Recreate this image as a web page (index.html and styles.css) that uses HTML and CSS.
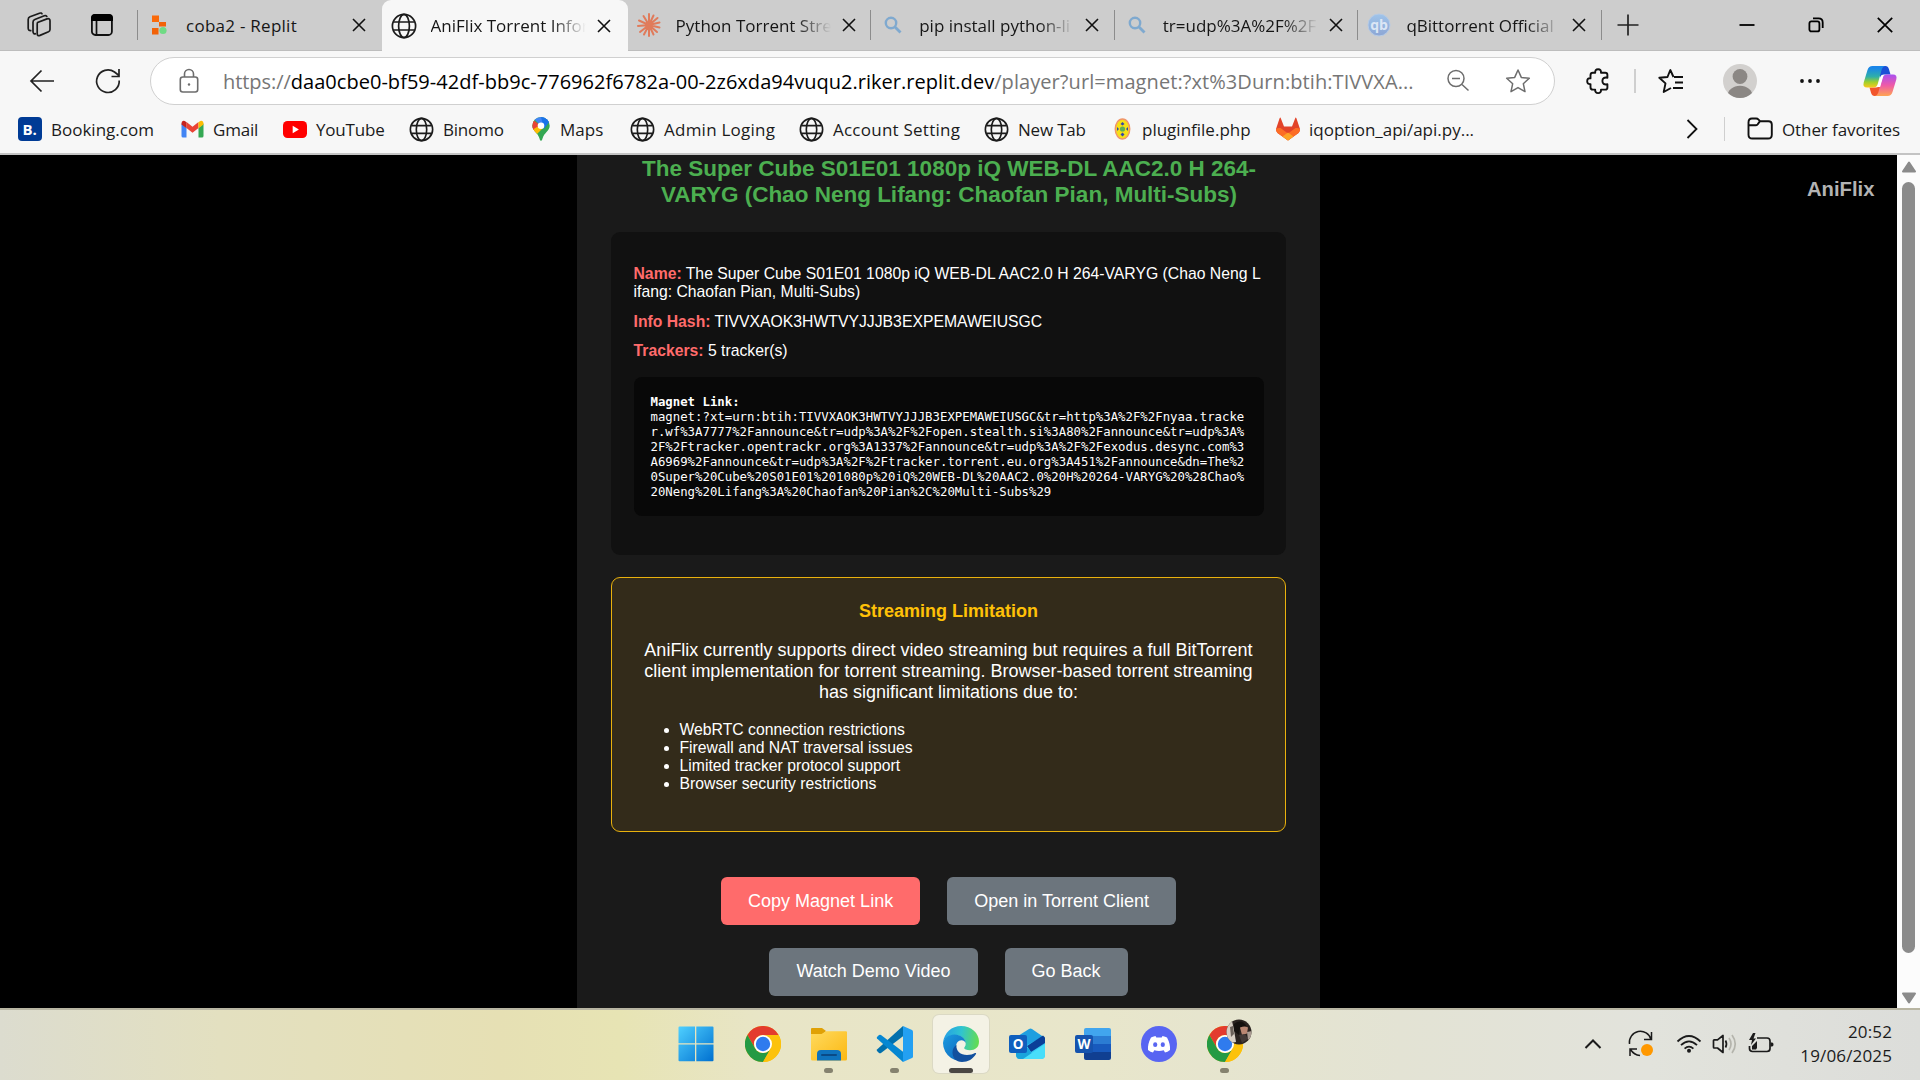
FILE: index.html
```html
<!DOCTYPE html>
<html lang="en">
<head>
<meta charset="utf-8">
<title>AniFlix Torrent Information</title>
<link rel="stylesheet" href="styles.css">
</head>
<body>
<svg class="defs" width="0" height="0">
  <defs>
    <symbol id="globe" viewBox="0 0 26 26"><g fill="none" stroke="#1b1b1b" stroke-width="1.7"><circle cx="13" cy="13" r="11.6"/><ellipse cx="13" cy="13" rx="5.4" ry="11.6"/><path d="M2.3 9h21.4M2.3 17h21.4"/></g></symbol>
    <symbol id="close" viewBox="0 0 14 14"><path d="M1 1l12 12M13 1L1 13" fill="none" stroke="#111" stroke-width="1.6"/></symbol>
    <symbol id="search" viewBox="0 0 18 18"><circle cx="7" cy="7" r="5.2" fill="none" stroke="#7fa9cf" stroke-width="2.4"/><path d="M11 11l5.5 5.5" stroke="#7fa9cf" stroke-width="2.8"/></symbol>
    <symbol id="chrome" viewBox="0 0 36 36"><circle cx="18" cy="18" r="18" fill="#fbbc05"/><path d="M2.4 9A18 18 0 0 1 33.6 9H18a9 9 0 0 0-7.8 13.5z" fill="#e33b2e"/><path d="M2.4 9A18 18 0 0 0 18 36l7.8-13.5A9 9 0 0 1 10.2 22.5z" fill="#249a44"/><path d="M18 36a18 18 0 0 0 15.6-27H18a9 9 0 0 1 7.8 13.5z" fill="#fcc20c"/><circle cx="18" cy="18" r="9" fill="#fff"/><circle cx="18" cy="18" r="7.2" fill="#2f7bee"/></symbol>
  </defs>
</svg>

<header class="tabstrip">
  <div class="strip-tools">
    <svg width="26" height="26" viewBox="0 0 26 26" fill="none" stroke="#1b1b1b" stroke-width="1.7" stroke-linejoin="round"><path d="M11.500 10.500l9.500-3.600q3-.9 3 1.900v8.600q0 1.600-1.500 2.300l-8.500 3.700q-2.800 1-2.800-1.700v-9q0-1.500.3-2.200z"/><path d="M10 21.700q-3 .6-3-2.200v-9.300q0-2 1.800-2.700l9.500-3.700q2.200-.7 2.700 1.300"/><path d="M5.500 18.500q-3.300.6-3.300-2.200V7.500q0-2 1.800-2.700l9.500-3.600q2.200-.7 2.700 1.200"/></svg>
    <svg width="24" height="24" viewBox="0 0 24 24"><rect x="1.900" y="2" width="20" height="20" rx="3.500" fill="none" stroke="#111" stroke-width="1.800"/><path d="M1 8V5a4 4 0 0 1 4-4h14a4 4 0 0 1 4 4v3z" fill="#000"/><path d="M6.500 8v14" stroke="#111" stroke-width="1.700"/></svg>
  </div>
  <div class="tab">
    <svg class="tab-icon" width="26" height="26" viewBox="0 0 26 26"><path d="M13 10h7v4.500h-7zM6 16h6.500v6.500H6z" fill="#f26207"/><path d="M6 3.500h7v6.500H6z" fill="#fa6a0a"/><circle cx="17" cy="18.500" r="3.600" fill="#6fdb84"/></svg>
    <span class="tab-title spaced">coba2 - Replit</span>
    <svg class="tab-close" width="14" height="14"><use href="#close"/></svg>
  </div>
  <div class="tab active">
    <svg class="tab-icon" width="26" height="26"><use href="#globe"/></svg>
    <span class="tab-title fade">AniFlix Torrent Infor</span>
    <svg class="tab-close" width="14" height="14"><use href="#close"/></svg>
  </div>
  <div class="tab">
    <svg class="tab-icon" width="26" height="26" viewBox="0 0 26 26" stroke="#e07b5b" stroke-width="2" stroke-linecap="round"><path d="M13 13V2M13 13l4.500-9.500M13 13l8.500-7M13 13l10.500-2.500M13 13l10.500 2.500M13 13l8 7M13 13l4.500 9.500M13 13v11M13 13l-5 9.500M13 13l-9 7M13 13l-11 1M13 13L3 8.500M13 13L7.500 4"/></svg>
    <span class="tab-title fade">Python Torrent Stre</span>
    <svg class="tab-close" width="14" height="14"><use href="#close"/></svg>
  </div>
  <div class="tab">
    <svg class="tab-icon small" width="18" height="18"><use href="#search"/></svg>
    <span class="tab-title fade">pip install python-li</span>
    <svg class="tab-close" width="14" height="14"><use href="#close"/></svg>
  </div>
  <div class="tab">
    <svg class="tab-icon small" width="18" height="18"><use href="#search"/></svg>
    <span class="tab-title fade">tr=udp%3A%2F%2F</span>
    <svg class="tab-close" width="14" height="14"><use href="#close"/></svg>
  </div>
  <div class="tab">
    <svg class="tab-icon" width="26" height="26" viewBox="0 0 26 26"><defs><linearGradient id="qbg" x1="0" y1="0" x2="0" y2="1"><stop offset="0" stop-color="#9fc4ea"/><stop offset="1" stop-color="#8da6d4"/></linearGradient></defs><circle cx="13" cy="13" r="11" fill="url(#qbg)" stroke="#b6cbe6"/><text x="13" y="17.500" class="qb">qb</text></svg>
    <span class="tab-title fade">qBittorrent Official</span>
    <svg class="tab-close" width="14" height="14"><use href="#close"/></svg>
  </div>
  <svg class="new-tab" width="22" height="22" viewBox="0 0 22 22"><path d="M11 .5v21M.5 11h21" stroke="#222" stroke-width="1.700"/></svg>
  <div class="window-buttons">
    <svg width="16" height="16" viewBox="0 0 16 16"><path d="M.5 8h15" stroke="#000" stroke-width="1.800"/></svg>
    <svg width="16" height="16" viewBox="0 0 16 16" fill="none" stroke="#000" stroke-width="1.800"><rect x="1.400" y="4.400" width="10" height="10" rx="2"/><path d="M5 1.300h5.500q4.200 0 4.200 4.200V11"/></svg>
    <svg width="16" height="16" viewBox="0 0 16 16"><path d="M.8.8l14.400 14.400M15.200.8L.8 15.200" stroke="#000" stroke-width="1.700"/></svg>
  </div>
</header>

<nav class="toolbar">
  <svg class="back" width="26" height="24" viewBox="0 0 26 24" fill="none" stroke="#222" stroke-width="1.700"><path d="M25 12H2M12.500 1.500L2 12l10.500 10.500"/></svg>
  <svg class="reload" width="26" height="26" viewBox="0 0 26 26" fill="none" stroke="#222" stroke-width="1.700"><path d="M24.200 12.500A11.300 11.300 0 1 1 19.500 4L24 7.500M24 1v7.500h-7.500"/></svg>
  <div class="address">
    <svg class="lock" width="20" height="26" viewBox="0 0 20 26" fill="none" stroke="#6d6d6d" stroke-width="1.600"><rect x="1.300" y="9" width="17.400" height="15" rx="2.500"/><path d="M5.500 9V6a4.500 4.500 0 0 1 9 0v3"/><circle cx="10" cy="16.500" r="1.200" fill="#6d6d6d" stroke="none"/></svg>
    <span class="url"><span class="scheme">https://</span><span class="host">daa0cbe0-bf59-42df-bb9c-776962f6782a-00-2z6xda94vuqu2.riker.replit.dev</span><span class="path">/player?url=magnet:?xt%3Durn:btih:TIVVXA...</span></span>
    <svg class="zoom-icon" width="24" height="24" viewBox="0 0 24 24" fill="none" stroke="#6d6d6d" stroke-width="1.500"><circle cx="10" cy="9.500" r="8"/><path d="M16 15.500l6.500 6M6 9.500h8"/></svg>
    <svg class="star" width="26" height="26" viewBox="0 0 26 26" fill="none" stroke="#6d6d6d" stroke-width="1.500" stroke-linejoin="round"><path d="M13 2l3.300 7.400 8 .9-6 5.400 1.700 7.900-7-4-7 4 1.700-7.900-6-5.400 8-.9z"/></svg>
  </div>
  <svg class="puzzle" width="24" height="26" viewBox="0 0 24 26" fill="none" stroke="#111" stroke-width="1.900" stroke-linejoin="round"><path d="M4.500 7.200q0-2.400 2.400-2.400h2.300q-.3-3.600 2.900-3.600t2.900 3.600h4.200q2.200 0 2.200 2.200v2.700q-5-.8-5 3.300t5 3.300v3.100q0 2.200-2.200 2.200h-4.200q.3 3.500-2.900 3.500t-2.900-3.500H6.900q-2.400 0-2.400-2.400v-3.100q-3.300.4-3.300-2.900t3.300-2.900z"/></svg>
  <i class="rule"></i>
  <svg class="favs" width="26" height="26" viewBox="0 0 26 26" fill="none" stroke="#111" stroke-width="1.900" stroke-linejoin="round"><path d="M16 9h9M17 14.500h8M15 20h10M15.500 9L12.300 2 9.500 9l-8.200.8 6.200 5.600L5.700 24l7.300-4"/></svg>
  <svg class="avatar" width="34" height="34" viewBox="0 0 34 34"><defs><clipPath id="av"><circle cx="17" cy="17" r="17"/></clipPath></defs><g clip-path="url(#av)"><rect width="34" height="34" fill="#d2d0ce"/><circle cx="17" cy="12.500" r="7.400" fill="#8b8784"/><ellipse cx="17" cy="32" rx="12.500" ry="10.200" fill="#8b8784"/></g></svg>
  <svg class="dots" width="22" height="6" viewBox="0 0 22 6" fill="#111"><circle cx="3" cy="3" r="1.900"/><circle cx="11" cy="3" r="1.900"/><circle cx="19" cy="3" r="1.900"/></svg>
  <svg class="copilot" width="34" height="32" viewBox="0 0 34 32"><defs><linearGradient id="cp1" x1="0" y1="0" x2="0" y2="1"><stop offset=".1" stop-color="#1a86e8"/><stop offset=".5" stop-color="#2fb0a8"/><stop offset=".75" stop-color="#9fd02c"/><stop offset="1" stop-color="#fbc81a"/></linearGradient><linearGradient id="cp2" x1="0" y1="0" x2="0" y2="1"><stop offset="0" stop-color="#a94ff0"/><stop offset=".5" stop-color="#ee5aa8"/><stop offset="1" stop-color="#ffa552"/></linearGradient></defs><path d="M17 1h5.500q2.500 0 3.400 3l1.600 5.500H21q-3 0-4 3z" fill="#1a4fd6"/><path d="M17 31h-5.500q-2.500 0-3.400-3l-1.600-5.500H13q3 0 4-3z" fill="#f2552c"/><path d="M9.500 1H22q-2.500.5-3.300 3.500l-4 14.500q-1 3.500-4.500 3.500H4q-4.500 0-3.300-5L4.500 5Q5.700 1 9.500 1z" fill="url(#cp1)"/><path d="M24.500 31H12q2.500-.5 3.300-3.500l4-14.500q1-3.500 4.500-3.500H30q4.500 0 3.300 5L29.500 27q-1.200 4-5 4z" fill="url(#cp2)"/><path d="M18.500 10.500h2l-3.400 11.500h-3z" fill="#fff"/></svg>
</nav>

<nav class="bookmarks">
  <div class="bm"><svg width="24" height="24" viewBox="0 0 24 24"><rect width="24" height="24" rx="4" fill="#003b95"/><text x="4.500" y="17.500" class="bk">B.</text></svg><span>Booking.com</span></div>
  <div class="bm tight"><svg width="23" height="18" viewBox="0 0 22 18"><path d="M0 3.500V16q0 1.500 1.500 1.500H5V8z" fill="#4285f4"/><path d="M17 8v9.500h3.500q1.500 0 1.500-1.500V3.500z" fill="#34a853"/><path d="M5 8v-6l6 4.700L17 2v6l-6 4.700z" fill="#ea4335"/><path d="M0 3.200Q0 1 2 .8q1-.1 2 .6l1 .8v6L0 4.500z" fill="#c5221f"/><path d="M22 3.200Q22 1 20 .8q-1-.1-2 .6l-1 .8v6l5-3.700z" fill="#fbbc04"/></svg><span>Gmail</span></div>
  <div class="bm tight"><svg width="24" height="17" viewBox="0 0 24 17"><rect width="24" height="17" rx="4.500" fill="#f00"/><path d="M9.700 4.800v7.400l6.200-3.700z" fill="#fff"/></svg><span>YouTube</span></div>
  <div class="bm tight"><svg width="25" height="25"><use href="#globe"/></svg><span>Binomo</span></div>
  <div class="bm"><svg width="20" height="24" viewBox="0 0 18 24"><defs><clipPath id="pin"><path d="M9 0a8.700 8.700 0 0 1 8.700 8.700c0 5-5.500 7-7 12.300Q10 24 9 24t-1.700-3C5.800 15.700.3 13.700.3 8.700A8.700 8.700 0 0 1 9 0z"/></clipPath></defs><g clip-path="url(#pin)"><rect width="18" height="24" fill="#34a853"/><path d="M0 0h18v4L9 9z" fill="#4285f4"/><path d="M0 2l9 7-6 7-3-3z" fill="#ea4335"/><path d="M0 13l5-3 10-3-10 10z" fill="#fbbc04"/><path d="M9 0h5l4 4-6 8z" fill="#1a73e8"/></g><circle cx="9" cy="8.700" r="3.300" fill="#fff"/></svg><span>Maps</span></div>
  <div class="bm loose"><svg width="25" height="25"><use href="#globe"/></svg><span>Admin Loging</span></div>
  <div class="bm loose"><svg width="25" height="25"><use href="#globe"/></svg><span>Account Setting</span></div>
  <div class="bm tight"><svg width="25" height="25"><use href="#globe"/></svg><span>New Tab</span></div>
  <div class="bm"><svg width="19" height="22" viewBox="0 0 16 22"><ellipse cx="7" cy="11" rx="7.200" ry="10" fill="#f6e017" stroke="#f0956a" stroke-width="1.500"/><path d="M7 4l2 2-2 1.500L5 6zM7 14.500l2 2-2 2-2-2zM1.500 9l2 2-2 2zM12.500 9l-2 2 2 2z" fill="#3346a8"/><circle cx="7" cy="11" r="2.600" fill="#5fae5a"/></svg><span>pluginfile.php</span></div>
  <div class="bm"><svg width="24" height="24" viewBox="0 0 24 24"><path d="M4.500.5L8 9.500h8l3.500-9q.6 0 1 1L24 12q.2 2.500-1.500 4L12 23.500 1.500 16Q-.2 14.500 0 12L3.500 1.500q.4-1 1-1z" fill="#e24329"/><path d="M0 12q1.500-1.500 4.500-1L12 16.500 19.500 11q3-.5 4.500 1 .2 2.500-1.500 4L12 23.500 1.500 16Q-.2 14.500 0 12z" fill="#fc6d26"/><path d="M12 15.500l5.500 4L12 23.500l-5.500-4z" fill="#fca326"/></svg><span>iqoption_api/api.py...</span></div>
  <div class="more"><svg width="12" height="20" viewBox="0 0 12 20"><path d="M.5 1l9 9-9 9" fill="none" stroke="#111" stroke-width="1.800"/></svg></div>
  <div class="other"><svg width="26" height="24" viewBox="0 0 26 24" fill="none" stroke="#111" stroke-width="1.900" stroke-linejoin="round"><path d="M1.500 5.500q0-4 3.500-4h4.200q1.300 0 2.100.9l1.700 1.800h8.500q3.300 0 3.300 3.300v10.200q0 3.800-3.800 3.800H5.300q-3.800 0-3.800-3.800zM1.500 8.200h7q1.300 0 2.100-.9L13 4.200"/></svg><span>Other favorites</span></div>
</nav>

<div class="viewport">
  <div class="brand">AniFlix</div>
  <main class="panel">
    <h2 class="title">The Super Cube S01E01 1080p iQ WEB-DL AAC2.0 H 264-<br>VARYG (Chao Neng Lifang: Chaofan Pian, Multi-Subs)</h2>
    <section class="info">
      <p><b>Name:</b> The Super Cube S01E01 1080p iQ WEB-DL AAC2.0 H 264-VARYG (Chao Neng L<br>ifang: Chaofan Pian, Multi-Subs)</p>
      <p><b>Info Hash:</b> TIVVXAOK3HWTVYJJJB3EXPEMAWEIUSGC</p>
      <p><b>Trackers:</b> 5 tracker(s)</p>
      <div class="magnet"><b>Magnet Link:</b><br>magnet:?xt=urn:btih:TIVVXAOK3HWTVYJJJB3EXPEMAWEIUSGC&amp;tr=http%3A%2F%2Fnyaa.tracker.wf%3A7777%2Fannounce&amp;tr=udp%3A%2F%2Fopen.stealth.si%3A80%2Fannounce&amp;tr=udp%3A%2F%2Ftracker.opentrackr.org%3A1337%2Fannounce&amp;tr=udp%3A%2F%2Fexodus.desync.com%3A6969%2Fannounce&amp;tr=udp%3A%2F%2Ftracker.torrent.eu.org%3A451%2Fannounce&amp;dn=The%20Super%20Cube%20S01E01%201080p%20iQ%20WEB-DL%20AAC2.0%20H%20264-VARYG%20%28Chao%20Neng%20Lifang%3A%20Chaofan%20Pian%2C%20Multi-Subs%29</div>
    </section>
    <section class="warning">
      <h3>Streaming Limitation</h3>
      <p>AniFlix currently supports direct video streaming but requires a full BitTorrent<br>client implementation for torrent streaming. Browser-based torrent streaming<br>has significant limitations due to:</p>
      <ul>
        <li>WebRTC connection restrictions</li>
        <li>Firewall and NAT traversal issues</li>
        <li>Limited tracker protocol support</li>
        <li>Browser security restrictions</li>
      </ul>
    </section>
    <div class="actions">
      <a class="btn primary">Copy Magnet Link</a><a class="btn">Open in Torrent Client</a>
    </div>
    <div class="actions">
      <a class="btn">Watch Demo Video</a><a class="btn">Go Back</a>
    </div>
  </main>
  <div class="scrollbar">
    <svg width="16" height="12" viewBox="0 0 16 12"><path d="M8 1.500l6 9H2z" fill="#8b8b8b" stroke="#8b8b8b" stroke-width="2" stroke-linejoin="round"/></svg>
    <i class="thumb"></i>
    <svg width="16" height="12" viewBox="0 0 16 12"><path d="M8 10.500l6-9H2z" fill="#8b8b8b" stroke="#8b8b8b" stroke-width="2" stroke-linejoin="round"/></svg>
  </div>
</div>

<footer class="taskbar">
  <div class="apps">
    <div class="app start"><svg width="36" height="36" viewBox="0 0 36 36"><defs><linearGradient id="win" x1="0" y1="0" x2="1" y2="1"><stop offset="0" stop-color="#4fd0ff"/><stop offset="1" stop-color="#0070d0"/></linearGradient></defs><path d="M1.500.5H17v16.700H.5V1.500q0-1 1-1zM18.300.5H34.500q1 0 1 1v15.700H18.300zM.5 18.500H17v16.700H1.500q-1 0-1-1zM18.300 18.500h17.200v15.700q0 1-1 1H18.300z" fill="url(#win)"/></svg></div>
    <div class="app"><svg width="36" height="36"><use href="#chrome"/></svg></div>
    <div class="app open"><svg width="36" height="36" viewBox="0 0 36 36"><defs><linearGradient id="fol" x1="0" y1="0" x2="1" y2="1"><stop offset="0" stop-color="#ffda5e"/><stop offset="1" stop-color="#fbb812"/></linearGradient></defs><path d="M0 3q0-1 1-1h10l4 3-4 4H0z" fill="#e0a106"/><path d="M0 8h10.500L15 5.200h20q1 0 1 1V33q0 1.500-1.500 1.500h-33Q0 34.500 0 33z" fill="url(#fol)"/><path d="M6 34.500V28q0-4 4-4h16q4 0 4 4v6.500z" fill="#0f73bd"/><path d="M11 29h14" stroke="#0a4a86" stroke-width="2" stroke-linecap="round"/></svg></div>
    <div class="app open"><svg width="36" height="36" viewBox="0 0 36 36"><path d="M26 0L0 23.500q-.5 1 0 1.500l2 2q1 .6 2 0L27 9.500z" fill="#0270ad"/><path d="M26 36L0 12.500q-.5-1 0-1.500l2-2q1-.6 2 0L27 26.500z" fill="#0687d2"/><path d="M26 0l9 4q1 .5 1 1.500v25q0 1-1 1.500l-9 4z" fill="#23a0f2"/></svg></div>
    <div class="app open current"><svg width="36" height="36" viewBox="0 0 36 36"><defs><linearGradient id="eg1" x1="0" y1=".3" x2="1" y2=".4"><stop offset="0" stop-color="#259ee6"/><stop offset=".5" stop-color="#30c4d0"/><stop offset="1" stop-color="#63dc52"/></linearGradient><linearGradient id="eg2" x1="0" y1="0" x2="1" y2="1"><stop offset="0" stop-color="#1b9be0"/><stop offset="1" stop-color="#0d5fb8"/></linearGradient></defs><path d="M0 17C1 6.500 9 0 18 0c10.500 0 18 7.500 18 15.500 0 6-4 8.700-9 8.700-3.300 0-5.800-.9-5.800-2.200 0-1 1.500-1.500 1.500-4.200C22.700 13 18 9 12 9 5 9 .5 13 0 17z" fill="url(#eg1)"/><path d="M0 17C.5 12.500 5 8.500 11.500 8.500c6 0 11 4 11.200 8.500-.7-1.700-2.200-2.800-4.200-2.800-3.500 0-5.500 3-5.500 7 0 7 6 12.300 12 12.300A18 18 0 0 1 0 17z" fill="url(#eg2)"/><path d="M13.500 19c-.8 6 4 10 10.500 10 3.500 0 6-1 8-2q1.500-.5 1 1C30 33 25 36 19 36c-6 0-9.500-4.500-9.500-9.500 0-3.500 1.700-6 4-7.500z" fill="#12509e"/></svg></div>
    <div class="app"><svg width="36" height="36" viewBox="0 0 36 36"><path d="M6 12L20 3q1.500-.8 3 0l13 9v3L20 26H6z" fill="#1f9fe0"/><path d="M7 25L34 10.500q2 .8 2 3V29q0 4-4 4H11q-4 0-4-4z" fill="#35c9f2"/><path d="M18 20L34 9.500l2 2V17L22 26z" fill="#0a3f98"/><path d="M7 25l12-3 8 11H11q-4 0-4-4z" fill="#19a4dc"/><path d="M14 33L36 18v11q0 4-4 4z" fill="#48defa"/><rect y="9" width="18" height="18" rx="2" fill="#0f5fbe"/><text x="9" y="23" class="off">O</text></svg></div>
    <div class="app"><svg width="36" height="36" viewBox="0 0 36 36"><path d="M9 4q0-2 2-2h23q2 0 2 2v6H9z" fill="#41a5ee"/><path d="M9 10h27v8H9z" fill="#2b7cd3"/><path d="M9 18h27v8H9z" fill="#185abd"/><path d="M9 26h27v6q0 2-2 2H11q-2 0-2-2z" fill="#103f91"/><rect y="9" width="18" height="18" rx="2" fill="#1553ae"/><text x="9" y="23" class="off">W</text></svg></div>
    <div class="app"><svg width="36" height="36" viewBox="0 0 36 36"><circle cx="18" cy="18" r="18" fill="#5865f2"/><path d="M14.500 10q-3 .5-4.500 1.500Q6.500 18 7 24q2.500 2 5 2.500l1.300-2.200q4.700 1.200 9.400 0L24 26.500q2.500-.5 5-2.500.5-6-3-12.500-1.500-1-4.500-1.500l-.8 1.500h-5.400z" fill="#fff"/><ellipse cx="14.200" cy="18.700" rx="2.100" ry="2.400" fill="#5865f2"/><ellipse cx="21.800" cy="18.700" rx="2.100" ry="2.400" fill="#5865f2"/></svg></div>
    <div class="app open"><svg width="36" height="36"><use href="#chrome"/></svg>
      <svg class="profile" width="26" height="26" viewBox="0 0 26 26"><defs><clipPath id="pf"><circle cx="13" cy="13" r="12.500"/></clipPath></defs><g clip-path="url(#pf)"><rect width="26" height="26" fill="#2a2320"/><path d="M0 6l6-4 2 9 2 12-5 1-5-6z" fill="#d8cfc4"/><path d="M4 8l3-1 1 8-3 3z" fill="#6b615a"/><path d="M8 5q8-6 13 3l-7 1-1 7-5-4z" fill="#15110f"/><path d="M14 8.500q5-2 8 0l-1 6-5 1.500z" fill="#b98672"/><path d="M13 16l6-1 3 5-6 4z" fill="#433a38"/><path d="M21 13l5-1v6l-4 3z" fill="#a99b92"/></g></svg></div>
  </div>
  <div class="tray">
    <svg class="up" width="18" height="12" viewBox="0 0 18 12"><path d="M1.500 10L9 2.500l7.500 7.500" fill="none" stroke="#1b1b1b" stroke-width="2"/></svg>
    <svg class="sync" width="26" height="26" viewBox="0 0 26 26" fill="none" stroke="#1b1b1b" stroke-width="1.500"><path d="M1.500 13A11 11 0 0 1 23 8.500M23.500 1v7.500H16M2 25v-7h7M2.500 18.500Q6 24 12 24.500"/><circle cx="19" cy="19" r="6" fill="#ff9800" stroke="none"/></svg>
    <svg class="wifi" width="26" height="20" viewBox="0 0 26 20" fill="none" stroke="#1b1b1b" stroke-width="1.800"><path d="M1.500 7.500q11.500-11 23 0M5 11.200q8-7.600 16 0M8.600 14.600q4.400-4 8.800 0"/><circle cx="13" cy="16.800" r="2" fill="#1b1b1b" stroke="none"/></svg>
    <svg class="vol" width="26" height="22" viewBox="0 0 26 22" fill="none" stroke="#1b1b1b" stroke-width="1.700" stroke-linejoin="round"><path d="M1.500 7.500q0-.7.700-.7h3.300L11 2.500v17L5.500 15H2.200q-.7 0-.7-.7zM13.500 7.500q2 3.500 0 7"/><path d="M17 5q4 6 0 12M20 2q6.500 9 0 18" stroke="#b4b4ac"/></svg>
    <svg class="bat" width="26" height="22" viewBox="0 0 26 22"><path d="M9 5h10q3 0 3 3v7.500q0 3-3 3H4.500q-3 0-3-3V13" fill="none" stroke="#1b1b1b" stroke-width="1.700"/><path d="M22.500 9.500h1.500q1.500 0 1.500 2t-1.500 2h-1.500zM5 0L1 7h3l-1 5 5-6.500H5.500L7.500 0zM4 16.500V13l5-5v7l-1 1.500z" fill="#1b1b1b"/></svg>
    <div class="clock"><span>20:52</span><span>19/06/2025</span></div>
  </div>
</footer>
</body>
</html>
```
FILE: styles.css
```css
* { box-sizing: border-box; }
body {
  margin: 0;
  width: 1920px;
  height: 1080px;
  overflow: hidden;
  display: flex;
  flex-direction: column;
  font-family: "Open Sans", "Noto Sans", sans-serif;
  font-size: 17px;
  color: #1b1b1b;
  background: #000;
}
svg { display: block; flex: none; overflow: visible; }
.defs { position: absolute; }
p, h2, h3, ul { margin: 0; }

/* Tab strip */
.tabstrip {
  height: 51px;
  flex: none;
  display: flex;
  align-items: center;
  background: #cdcdcd;
  border-bottom: 1px solid #bdbdbd;
}
.strip-tools {
  width: 138px;
  height: 30px;
  padding-left: 26px;
  display: flex;
  align-items: center;
  gap: 38px;
  border-right: 1.5px solid #8c8c8c;
}
.tab {
  width: 243.6px;
  height: 30px;
  flex: none;
  display: flex;
  align-items: center;
  border-right: 1.5px solid #8c8c8c;
}
.tab-icon { margin: 0 14px 0 8px; }
.tab-icon.small { margin: 0 17px 0 13px; }
.tab-title {
  width: 155px;
  white-space: nowrap;
  line-height: 28px;
  padding-top: 1px;
  color: #161616;
}
.spaced { letter-spacing: .26px; }
.fade {
  -webkit-mask-image: linear-gradient(90deg, #000 120px, transparent 155px);
  mask-image: linear-gradient(90deg, #000 120px, transparent 155px);
}
.tab-close { margin-left: 11px; }
.tab.active {
  width: 246px;
  height: 52px;
  align-self: flex-start;
  background: #f7f7f7;
  border-right: 0;
  border-radius: 9px 9px 0 0;
}
.active .tab-icon { margin: 0 14px 0 9px; }
.active .tab-title { padding-top: 0; }
.tab:has(+ .active) { border-right-color: transparent; }
.qb { font: 700 14px "Open Sans", sans-serif; fill: #dbe6f5; text-anchor: middle; }
.new-tab { margin-left: 15px; }
.window-buttons {
  margin-left: auto;
  margin-right: 27px;
  display: flex;
  gap: 53px;
}

/* Toolbar */
.toolbar {
  height: 61px;
  flex: none;
  display: flex;
  align-items: center;
  padding-bottom: 1px;
  background: #f7f7f7;
}
.back { margin-left: 29px; }
.reload { margin-left: 40px; }
.address {
  width: 1405px;
  height: 48px;
  margin: 0 0 0 29px;
  padding: 0 23px 0 28px;
  display: flex;
  align-items: center;
  background: #fff;
  border: 1.5px solid #d0d0d0;
  border-radius: 24px;
}
.url {
  width: 1224px;
  margin-left: 24px;
  font-size: 20px;
  line-height: 28px;
  padding-top: 2px;
  white-space: nowrap;
  color: #767676;
}
.scheme { letter-spacing: -.05px; }
.host { color: #000; letter-spacing: .025px; }
.path { letter-spacing: .08px; }
.star { margin-left: 35px; }
.puzzle { margin-left: 31px; }
.rule { width: 1.5px; height: 24px; margin-left: 24px; background: #cfcfcf; }
.favs { margin-left: 22px; }
.avatar { margin-left: 39px; }
.dots { margin-left: 42px; }
.copilot { margin-left: 42px; }

/* Favorites bar */
.bookmarks {
  height: 43px;
  flex: none;
  padding: 0 20px 8px 18px;
  display: grid;
  grid-template-columns: 163px 102px 126px 122px 99px 169px 185px 130px 162px 411px 60px 1fr;
  align-items: center;
  background: #f7f7f7;
  border-bottom: 2px solid #c4c4c4;
}
.bm, .other { display: flex; align-items: center; gap: 9px; white-space: nowrap; height: 24px; line-height: 24px; }
.bm span, .other span { padding-top: 1px; }
.tight { letter-spacing: -.2px; }
.loose { letter-spacing: .24px; }
.other { letter-spacing: -.1px; }
.more {
  width: 38px;
  height: 24px;
  display: flex;
  align-items: center;
  border-right: 1px solid #cfcfcf;
}
.bm, .more, .other { margin-top: 1px; }
.bk { font: 700 15px "Open Sans", sans-serif; fill: #fff; letter-spacing: 0; }

/* Page */
.viewport {
  position: relative;
  height: 853px;
  flex: none;
  display: flex;
  background: #000;
  font-family: "Liberation Sans", Arial, sans-serif;
  color: #fff;
  overflow: hidden;
}
.brand {
  position: absolute;
  right: 45.500px;
  top: 23px;
  font-size: 20.25px;
  line-height: 23px;
  font-weight: 700;
  color: #b3b3b3;
}
.panel {
  width: 743px;
  margin-left: 577px;
  padding: 0 34px;
  background: #1a1a1a;
}
.title {
  padding: 1px 0 0 1px;
  font-size: 22.5px;
  line-height: 26px;
  font-weight: 700;
  text-align: center;
  white-space: nowrap;
  color: #4caf50;
}
.info {
  height: 323px;
  margin-top: 24px;
  padding: 33px 22px 0 22.5px;
  border-radius: 9px;
  background: #111;
  font-size: 15.75px;
  line-height: 18px;
  white-space: nowrap;
}
.info p { margin-bottom: 11.5px; }
.info p b { color: #ff6b6b; }
.magnet {
  height: 139px;
  margin-top: 17px;
  padding: 18px 15px 0 17px;
  border-radius: 8px;
  background: #080808;
  font-family: "DejaVu Sans Mono", monospace;
  font-size: 12.34px;
  line-height: 15px;
  white-space: normal;
  overflow-wrap: anywhere;
  word-break: break-all;
}
.warning {
  height: 255px;
  margin-top: 22px;
  padding: 23px 0 0;
  border: 1px solid #e9b10d;
  border-radius: 9px;
  background: #332b1a;
}
.warning h3 { font-size: 18px; line-height: 21px; text-align: center; color: #ffc107; }
.warning p { margin-top: 18px; font-size: 18px; line-height: 21px; text-align: center; white-space: nowrap; }
.warning ul { margin-top: 18px; padding-left: 67.5px; font-size: 15.75px; line-height: 18px; }
.actions { display: flex; justify-content: center; gap: 27px; margin-top: 23px; }
.warning + .actions { margin-top: 45px; }
.btn {
  height: 48px;
  padding: 0 27px;
  border-radius: 6px;
  background: #6c757d;
  font-size: 18px;
  line-height: 47px;
}
.warning + .actions .btn { line-height: 48px; }
.primary { background: #ff6b6b; }
.scrollbar {
  width: 23px;
  margin-left: auto;
  padding: 6px 0 4px;
  display: flex;
  flex-direction: column;
  align-items: center;
  background: #fcfcfc;
}
.thumb { width: 13px; height: 771px; margin: 9px 0 auto; border-radius: 7px; background: #8b8b8b; }

/* Taskbar */
.taskbar {
  height: 72px;
  flex: none;
  display: flex;
  justify-content: space-between;
  border-top: 2px solid #b8b5a2;
  background: linear-gradient(90deg, #dcdccf 0, #e3e0c0 220px, #e6e0b4 500px, #e7e4b4 620px, #e8e5c6 760px, #e8e6cb 1100px, #e3e3d4 1400px, #e2e3dc 1650px, #dcddda 1920px);
}
.apps { display: flex; margin-left: 661.500px; }
.app {
  position: relative;
  width: 66px;
  display: flex;
  flex-direction: column;
  align-items: center;
  padding-top: 16px;
}
.app.start { width: 68px; }
.open::after {
  content: "";
  width: 9px;
  height: 5px;
  margin-top: 6px;
  border-radius: 3px;
  background: #85826f;
}
.app.current {
  width: 56px;
  height: 58px;
  margin: 5px 5px 0;
  padding-top: 11px;
  border-radius: 6px;
  background: #f4f2e5;
  box-shadow: 0 0 0 1px #dbd9c4;
}
.current::after { width: 24px; background: #4a4743; }
.off { font: 700 13.5px "Open Sans", sans-serif; fill: #fff; text-anchor: middle; }
.profile { position: absolute; left: 34px; top: 9px; }
.tray { display: flex; align-items: center; padding-right: 28px; margin-top: -3px; }
.sync { margin-left: 26px; }
.wifi { margin-left: 22px; }
.vol { margin-left: 10px; }
.bat { margin-left: 10px; }
.clock {
  width: 118px;
  display: flex;
  flex-direction: column;
  align-items: flex-end;
  line-height: 24px;
  letter-spacing: .14px;
}
```
